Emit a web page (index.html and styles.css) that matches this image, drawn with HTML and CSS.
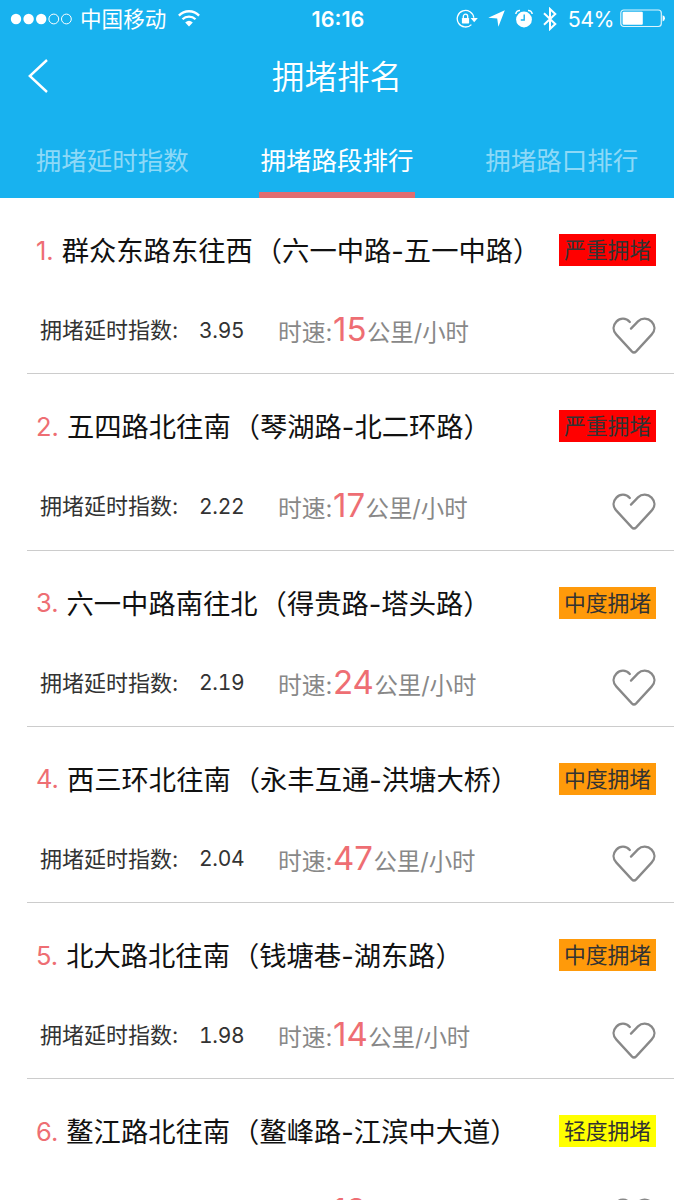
FILE: index.html
```html
<!DOCTYPE html>
<html lang="zh-CN">
<head>
<meta charset="utf-8">
<title>拥堵排名</title>
<link rel="stylesheet" href="styles.css">
</head>
<body>
<svg class="defs" width="0" height="0">
  <symbol id="heart" viewBox="0 0 44 38">
    <path d="M17.8 5 C14 .6 8 .8 4.4 4.6 C.6 8.6 .6 13.6 4.4 17.6 L19.8 34.4 Q22 36.6 24.2 34.4 L39.6 17.6 C43.4 13.6 43.4 8.6 39.6 4.6 C35.8 .8 29.8 .6 26 4.4 L19 11.6" fill="none"/>
  </symbol>
</svg>
<div class="screen">
  <header class="header">
    <div class="status">
      <div class="status-left">
        <svg width="62" height="14" viewBox="0 0 62 14"><g fill="#fff"><circle cx="6" cy="7" r="5.2"/><circle cx="18.6" cy="7" r="5.2"/><circle cx="31.2" cy="7" r="5.2"/></g><g fill="none" stroke="#fff" stroke-width="1"><circle cx="43.8" cy="7" r="4.9"/><circle cx="56.4" cy="7" r="4.9"/></g></svg>
        <span class="carrier">中国移动</span>
        <svg class="wifi" width="22" height="17" viewBox="0 0 22 17"><g fill="none" stroke="#fff" stroke-width="2.3"><path d="M.9 5.6 C6.4 -.2 15.6 -.2 21.1 5.6"/><path d="M4.5 9.3 C8.1 5.7 13.9 5.7 17.5 9.3"/></g><path d="M7.2 12.4 Q11 9 14.8 12.4 L11 16.4z" fill="#fff"/></svg>
      </div>
      <div class="clock">16:16</div>
      <div class="status-right">
        <svg width="22" height="20" viewBox="0 0 22 20"><path d="M15.4 15.6 A8.3 8.3 0 1 1 17.8 8.8" fill="none" stroke="#fff" stroke-width="1.3"/><path d="M14.6 9h7.2l-3.6 4.2z" fill="#fff"/><rect x="5.9" y="9" width="7.2" height="5.4" rx=".6" fill="#fff"/><path d="M7.3 9V7.4a2.2 2.2 0 0 1 4.4 0V9" fill="none" stroke="#fff" stroke-width="1.3"/></svg>
        <svg class="arrow" width="17" height="17" viewBox="0 0 17 17"><path d="M16.8.3 L10.4 16.7 L9.2 8.4 L.3 7.8z" fill="#fff"/></svg>
        <svg class="alarm" width="18" height="20" viewBox="0 0 18 20"><circle cx="9" cy="10.5" r="7.9" fill="#fff"/><path d="M.8 5 A4 4 0 0 1 5 1.4 M17.2 5 A4 4 0 0 0 13 1.4" fill="none" stroke="#fff" stroke-width="1.5"/><path d="M9.2 5.4V11H5.8" fill="none" stroke="#18b2ef" stroke-width="1.4"/></svg>
        <svg class="bt" width="14" height="24" viewBox="0 0 14 24"><path d="M1 6.2 L12.3 17 L7 22 V2 L12.3 7 L1 17.8" fill="none" stroke="#fff" stroke-width="2"/></svg>
        <span class="percent">54%</span>
        <svg width="45" height="19" viewBox="0 0 45 19"><rect x=".8" y="1" width="40.5" height="16.5" rx="3" fill="none" stroke="#fff" stroke-opacity=".85" stroke-width="1.2"/><rect x="2.6" y="2.8" width="20.2" height="13" rx="1" fill="#fff"/><path d="M42.6 6.3 Q45 7 45 9.3 T42.6 12.5z" fill="#fff"/></svg>
      </div>
    </div>
    <div class="nav">
      <svg class="back" width="22" height="36" viewBox="0 0 22 36"><path d="M20 2 L2.8 18 L20 34" fill="none" stroke="#fff" stroke-width="2.4"/></svg>
      <h1 class="title">拥堵排名</h1>
    </div>
    <nav class="tabs">
      <div class="tab"><span>拥堵延时指数</span></div>
      <div class="tab active"><span>拥堵路段排行</span></div>
      <div class="tab"><span>拥堵路口排行</span></div>
    </nav>
  </header>
  <main class="list">
    <section class="item">
      <div class="top"><span class="rank">1.</span><span class="road">群众东路东往西<i class="open">（</i>六一中路-五一中路）</span><span class="badge severe">严重拥堵</span></div>
      <div class="bottom"><span class="label">拥堵延时指数:</span><span class="value">3.95</span><span class="speed">时速:<b>15</b><span class="unit">公里/小时</span></span><svg class="heart"><use href="#heart"/></svg></div>
    </section>
    <section class="item">
      <div class="top"><span class="rank">2.</span><span class="road">五四路北往南<i class="open">（</i>琴湖路-北二环路）</span><span class="badge severe">严重拥堵</span></div>
      <div class="bottom"><span class="label">拥堵延时指数:</span><span class="value">2.22</span><span class="speed">时速:<b>17</b><span class="unit">公里/小时</span></span><svg class="heart"><use href="#heart"/></svg></div>
    </section>
    <section class="item">
      <div class="top"><span class="rank">3.</span><span class="road">六一中路南往北<i class="open">（</i>得贵路-塔头路）</span><span class="badge medium">中度拥堵</span></div>
      <div class="bottom"><span class="label">拥堵延时指数:</span><span class="value">2.19</span><span class="speed">时速:<b>24</b><span class="unit">公里/小时</span></span><svg class="heart"><use href="#heart"/></svg></div>
    </section>
    <section class="item">
      <div class="top"><span class="rank">4.</span><span class="road">西三环北往南<i class="open">（</i>永丰互通-洪塘大桥）</span><span class="badge medium">中度拥堵</span></div>
      <div class="bottom"><span class="label">拥堵延时指数:</span><span class="value">2.04</span><span class="speed">时速:<b>47</b><span class="unit">公里/小时</span></span><svg class="heart"><use href="#heart"/></svg></div>
    </section>
    <section class="item">
      <div class="top"><span class="rank">5.</span><span class="road">北大路北往南<i class="open">（</i>钱塘巷-湖东路）</span><span class="badge medium">中度拥堵</span></div>
      <div class="bottom"><span class="label">拥堵延时指数:</span><span class="value">1.98</span><span class="speed">时速:<b>14</b><span class="unit">公里/小时</span></span><svg class="heart"><use href="#heart"/></svg></div>
    </section>
    <section class="item partial">
      <div class="top"><span class="rank">6.</span><span class="road">鳌江路北往南<i class="open">（</i>鳌峰路-江滨中大道）</span><span class="badge light">轻度拥堵</span></div>
      <div class="bottom"><span class="label"></span><span class="value"></span><span class="speed"><b>13</b></span><svg class="heart"><use href="#heart"/></svg></div>
    </section>
  </main>
</div>
</body>
</html>
```
FILE: styles.css
```css
* { box-sizing: border-box; }
body { margin: 0; font-family: Inter, "Noto Sans CJK SC", sans-serif; background: #fff; }
.defs { display: block; }
svg { flex: none; }
.screen { width: 674px; height: 1200px; overflow: hidden; }
.header { height: 198px; background: #18b2ef; color: #fff; display: flex; flex-direction: column; }
.status { height: 37px; padding: 0 9px 0 10px; display: grid; grid-template-columns: 1fr auto 1fr; align-items: center; }
.status-left, .status-right { display: flex; align-items: center; }
.status-right { justify-content: flex-end; }
.carrier { font-size: 21.6px; line-height: 36px; margin-left: 8px; }
.wifi { margin-left: 12px; }
.clock { font-size: 21.6px; font-weight: 600; line-height: 36px; padding-left: 1px; }
.arrow { margin-left: 10px; }
.alarm { margin-left: 10px; }
.bt { margin-left: 10px; }
.percent { font-size: 21.4px; letter-spacing: -0.5px; margin: 0 6px 0 11px; }
.nav { height: 78px; display: grid; grid-template-columns: 60px 1fr 60px; align-items: center; }
.back { margin-left: 27px; }
.title { margin: 0; padding-top: 2px; text-align: center; font-size: 32.6px; font-weight: 350; line-height: 44px; }
.tabs { flex: 1; display: grid; grid-template-columns: repeat(3, 1fr); }
.tab { display: flex; justify-content: center; color: #8dd9f7; font-size: 25.5px; }
.tab span { width: 156px; line-height: 36px; padding-top: 28px; text-align: center; }
.tab.active { color: #fff; }
.tab.active span { border-bottom: 6px solid #e06d70; }
.item { height: 176.25px; margin-left: 27px; padding: 36px 18px 0 9px; border-bottom: 1px solid #ccc; }
.top { display: flex; align-items: center; height: 32px; }
.rank { color: #ee6e73; font-size: 25.5px; margin-right: 8px; }
.road { color: #111; font-size: 27.3px; line-height: 32px; padding-top: 4px; white-space: nowrap; }
.road i { font-style: normal; }
.open { margin-left: 2px; }
.badge { margin-left: auto; width: 97px; height: 32px; line-height: 33px; text-align: center; font-size: 21.8px; color: #333; }
.severe { background: #f00; }
.medium { background: #ff9a0a; }
.light { background: #ff0; }
.bottom { display: flex; align-items: center; height: 40px; margin-top: 44px; padding-left: 4px; }
.label { width: 159px; font-size: 22px; line-height: 32px; color: #333; }
.value { width: 79px; font-size: 21px; font-variant-numeric: tabular-nums; letter-spacing: -0.3px; color: #333; }
.speed { font-size: 23.8px; line-height: 40px; padding-top: 6px; color: #888; white-space: nowrap; }
.speed b { font-weight: 400; font-size: 33px; line-height: 30px; padding: 0 .5px; color: #ee6e73; }
.unit { font-size: 23.4px; }
.heart { width: 44px; height: 38px; margin: 11px 0 0 auto; stroke: #888; stroke-width: 2.3; stroke-linecap: round; }
.partial .speed { padding-left: 54px; }
```
